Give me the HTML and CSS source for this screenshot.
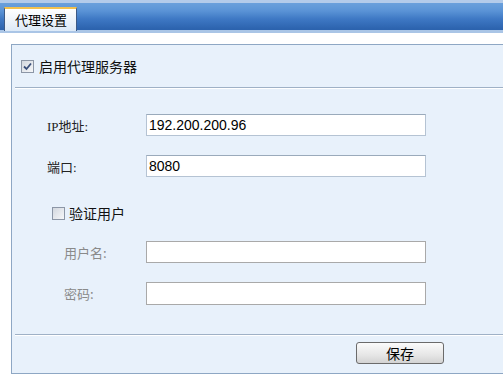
FILE: index.html
```html
<!DOCTYPE html>
<html lang="zh">
<head>
<meta charset="utf-8">
<link rel="stylesheet" href="styles.css">
</head>
<body>
<div class="topbar">
  <div class="tab">代理设置</div>
</div>
<div class="panel">
  <div class="enable-row">
    <span class="cb checked"><svg width="9" height="9" viewBox="0 0 9 9"><path d="M1 4.5 L3.5 7 L8 1.5" fill="none" stroke="#3a4f7a" stroke-width="1.8"/></svg></span>
    <span class="enable-label">启用代理服务器</span>
  </div>
  <div class="form">
    <div class="row"><span class="label">IP地址:</span><span class="input">192.200.200.96</span></div>
    <div class="row"><span class="label">端口:</span><span class="input">8080</span></div>
    <div class="auth-row"><span class="cb"></span><span class="auth-label">验证用户</span></div>
    <div class="row sub"><span class="label dim">用户名:</span><span class="input"></span></div>
    <div class="row sub"><span class="label dim">密码:</span><span class="input"></span></div>
  </div>
  <div class="footer">
    <button class="btn">保存</button>
  </div>
</div>
</body>
</html>
```

FILE: styles.css
```css
* { box-sizing: border-box; }
html, body { margin: 0; padding: 0; background: #fff; width: 503px; height: 375px; overflow: hidden; }
body { font-family: "Noto Sans CJK SC", "Liberation Sans", sans-serif; color: #111; }

.topbar {
  height: 33px;
  padding: 7px 0 0 4px;
  border-top: 3px solid #b3cbea;
  background: linear-gradient(#6aa0dc 0px, #5a93d6 8px, #3e78c4 16px, #2c63ae 26px, #2c63ae 27px);
  border-bottom: 3px solid #aac5e6;
  display: flex;
  align-items: flex-end;
}
.tab {
  width: 73px;
  height: 24px;
  margin-bottom: -1px;
  border: 1px solid #3c5a86;
  border-bottom: none;
  border-top: 2px solid #f2c14e;
  background: linear-gradient(#ffffff, #dce9f7);
  font-size: 13px;
  line-height: 21px;
  padding-left: 10px;
  color: #000;
}

.panel {
  margin: 11px 0 0 11px;
  height: 330px;
  background: #e8f1fb;
  border: 1px solid #8ea7c4;
  border-right: none;
  display: flex;
  flex-direction: column;
}
.enable-row {
  height: 43px;
  margin: 0 0 0 3px;
  padding-left: 6px;
  display: flex;
  align-items: center;
  gap: 5px;
  border-bottom: 1px solid #9fb1c6;
  box-shadow: 0 1px 0 #fff;
}
.cb {
  flex: none;
  width: 13px;
  height: 13px;
  border: 1px solid #8c96a6;
  background: linear-gradient(135deg, #d3d8df, #f6f7f9);
  display: inline-flex;
  align-items: center;
  justify-content: center;
}
.enable-label { font-size: 14px; }

.form {
  flex: 1;
  padding: 26px 0 0 35px;
  display: flex;
  flex-direction: column;
}
.row {
  display: flex;
  align-items: center;
  height: 22px;
  margin-bottom: 19px;
}
.label { width: 99px; font-size: 13px; color: #222; font-family: "Liberation Serif", "Noto Sans CJK SC", serif; }
.row.sub { padding-left: 17px; }
.row.sub .label { width: 82px; }
.dim { color: #8a8a8a; font-family: "Noto Sans CJK SC", sans-serif; }
.input {
  width: 280px;
  height: 22px;
  background: #fff;
  border: 1px solid #b5c3d3;
  border-top-color: #9aaabb;
  font-family: "Liberation Sans", Arial, sans-serif;
  font-size: 14px;
  line-height: 20px;
  padding-left: 2px;
  color: #000;
}
.row.sub .input { border-color: #a9a9a9; }
.row.sub + .row.sub .input { height: 23px; }
.auth-row {
  display: flex;
  align-items: center;
  gap: 4px;
  margin: 7px 0 18px 5px;
  height: 20px;
  font-size: 14px;
}

.footer {
  height: 39px;
  margin: 0 0 0 3px;
  border-top: 1px solid #9fb1c6;
  box-shadow: inset 0 1px 0 #fff;
  display: flex;
  align-items: flex-start;
  padding: 7px 0 0 341px;
}
.btn {
  width: 88px;
  height: 22px;
  border: 1px solid #6b6b6b;
  border-radius: 3px;
  background: linear-gradient(#fbfbfb, #e6e6e6 60%, #d3d3d3);
  font-family: "Noto Sans CJK SC", sans-serif;
  font-size: 14px;
  line-height: 18px;
  padding: 0;
  color: #000;
}
```
